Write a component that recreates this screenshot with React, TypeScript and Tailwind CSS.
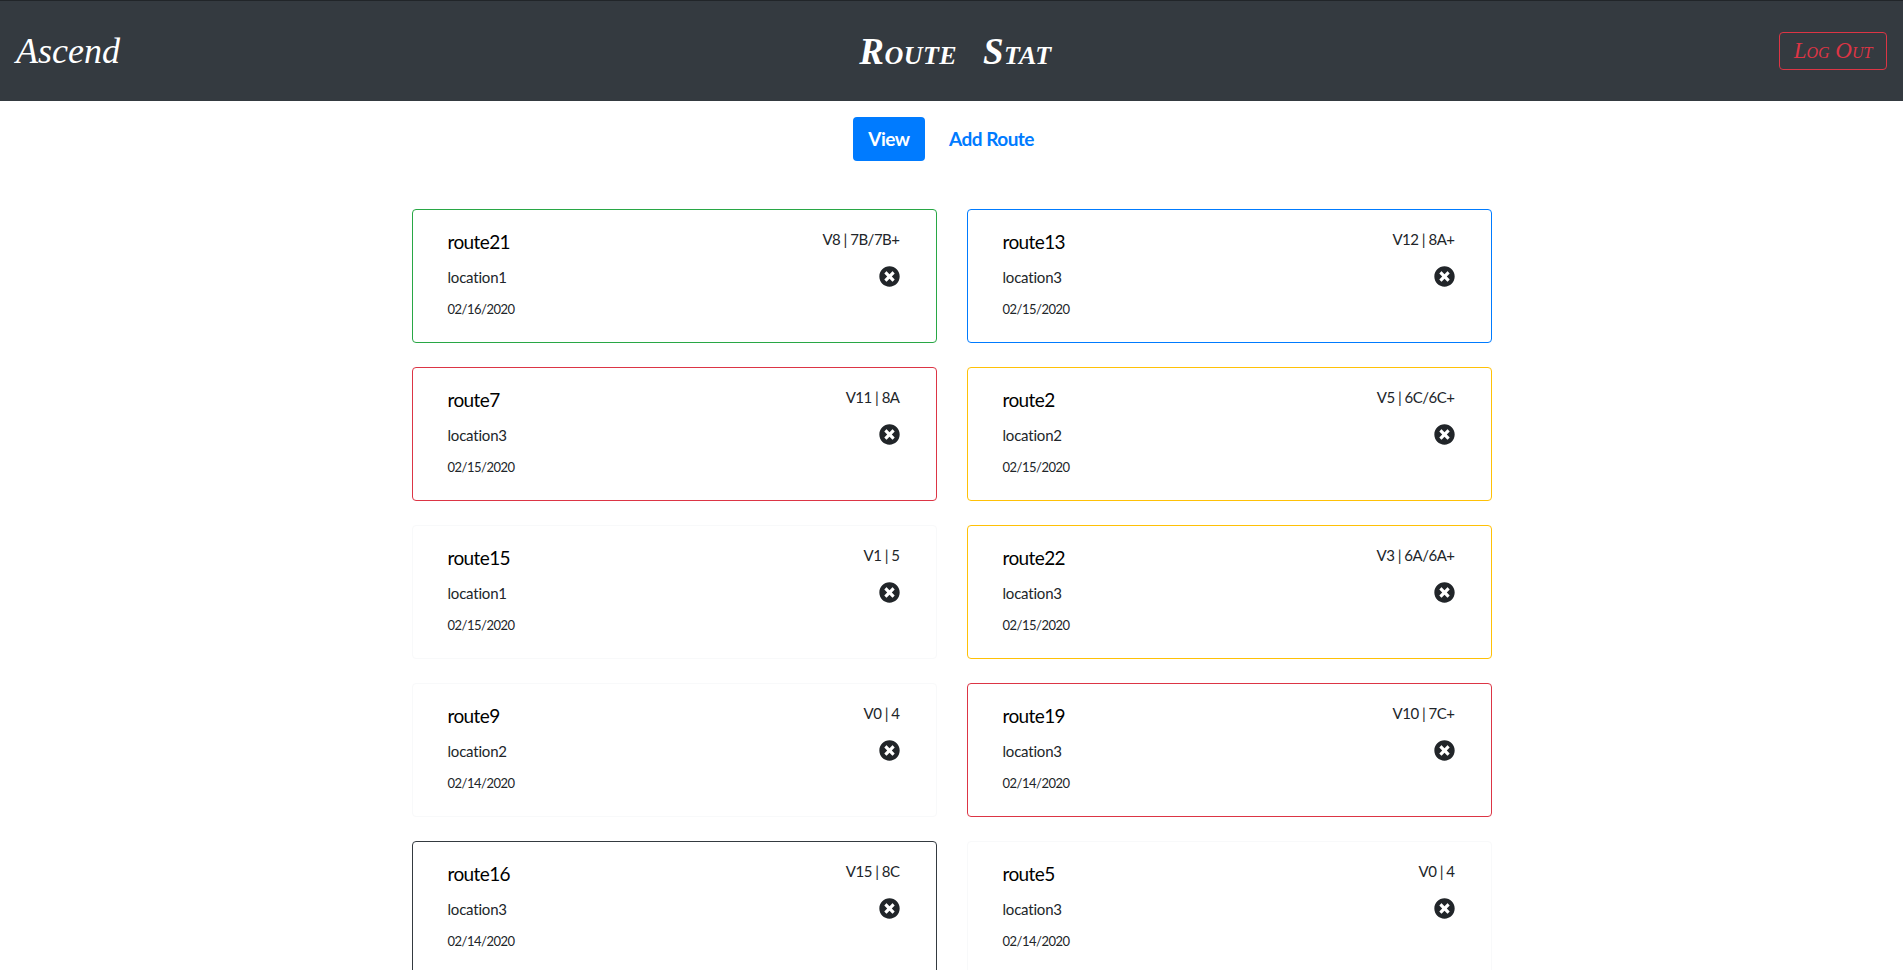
import { FaTimesCircle } from "react-icons/fa";

const routes = [
  { name: "route21", grade: "V8 | 7B/7B+", location: "location1", date: "02/16/2020", border: "border-[#28a745]" },
  { name: "route13", grade: "V12 | 8A+", location: "location3", date: "02/15/2020", border: "border-[#007bff]" },
  { name: "route7", grade: "V11 | 8A", location: "location3", date: "02/15/2020", border: "border-[#dc3545]" },
  { name: "route2", grade: "V5 | 6C/6C+", location: "location2", date: "02/15/2020", border: "border-[#ffc107]" },
  { name: "route15", grade: "V1 | 5", location: "location1", date: "02/15/2020", border: "border-[#f8f9fa]" },
  { name: "route22", grade: "V3 | 6A/6A+", location: "location3", date: "02/15/2020", border: "border-[#ffc107]" },
  { name: "route9", grade: "V0 | 4", location: "location2", date: "02/14/2020", border: "border-[#f8f9fa]" },
  { name: "route19", grade: "V10 | 7C+", location: "location3", date: "02/14/2020", border: "border-[#dc3545]" },
  { name: "route16", grade: "V15 | 8C", location: "location3", date: "02/14/2020", border: "border-[#343a40]" },
  { name: "route5", grade: "V0 | 4", location: "location3", date: "02/14/2020", border: "border-[#f8f9fa]" },
];

function RouteCard({ name, grade, location, date, border }: (typeof routes)[number]) {
  return (
    <div className={`flex h-[134px] justify-between rounded border bg-white pl-[35px] pr-[36px] pt-[17px] ${border}`}>
      <div>
        <p className="text-[19px] leading-[30px] tracking-[-0.6px] text-black">{name}</p>
        <p className="mt-2 text-[15px] leading-6 tracking-[-0.2px] text-[#212529]">{location}</p>
        <p className="mt-[10px] text-[13px] leading-[21px] tracking-[-0.5px] text-[#212529]">{date}</p>
      </div>
      <div className="flex flex-col items-end">
        <p className="text-[15px] leading-6 tracking-[-0.5px] text-[#212529]">{grade}</p>
        <FaTimesCircle className="mt-[15px] h-[21px] w-[21px] text-[#212529]" />
      </div>
    </div>
  );
}

export default function App() {
  return (
    <div className="h-[970px] overflow-hidden bg-white font-['Lato',sans-serif]">
      {/* Header */}
      <header className="grid h-[101px] grid-cols-[1fr_auto_1fr] items-center border-t border-[#212529] bg-[#343a40] px-4">
        <span className="justify-self-start font-['Liberation_Serif',serif] text-[36px] italic leading-none text-white">
          Ascend
        </span>
        <h1 className="ml-2 font-['Liberation_Serif',serif] text-[37px] font-bold italic leading-none tracking-[0.5px] text-white [font-variant:small-caps] [word-spacing:16px]">
          Route Stat
        </h1>
        <button className="flex h-[38px] w-[108px] items-center justify-center justify-self-end rounded border border-[#dc3545] font-['Liberation_Serif',serif] text-[23px] italic text-[#dc3545] [font-variant:small-caps]">
          Log Out
        </button>
      </header>

      {/* Tabs */}
      <nav className="mt-4 flex justify-center gap-2">
        <a className="flex h-11 w-[72px] items-center justify-center rounded bg-[#007bff] text-[19px] font-bold tracking-[-0.5px] text-white">View</a>
        <a className="flex h-11 items-center px-4 text-[19px] font-bold tracking-[-0.5px] text-[#007bff]">Add Route</a>
      </nav>

      {/* Route cards */}
      <main className="mx-auto mt-[48px] grid w-[1080px] grid-cols-2 gap-x-[30px] gap-y-6">
        {routes.map((route) => (
          <RouteCard key={route.name} {...route} />
        ))}
      </main>
    </div>
  );
}
